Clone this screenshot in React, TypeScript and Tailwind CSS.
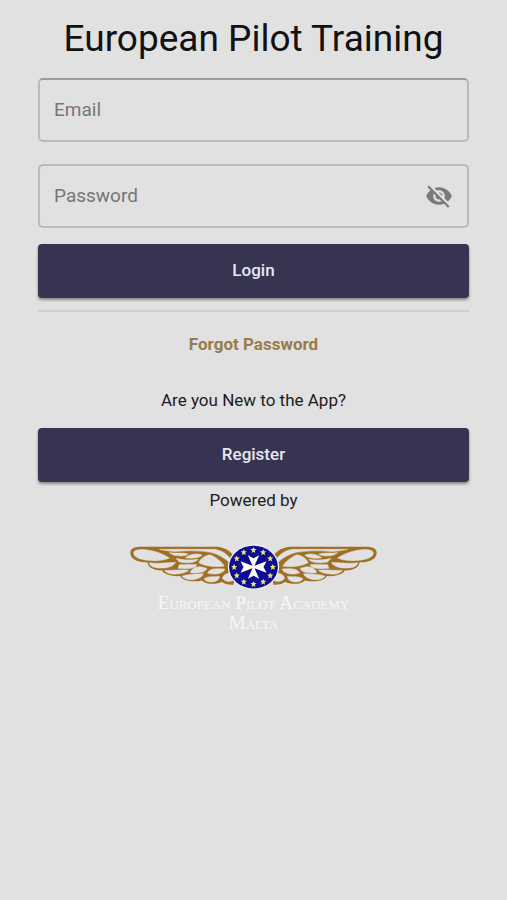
import React, { useState } from 'react';
import { MdVisibility, MdVisibilityOff } from 'react-icons/md';

const STARS = Array.from({ length: 12 }, (_, i) => i * 30);

// Light feather cells cut out of the solid wing shape
const FEATHERS = [
  'M41 51 C41 42 55 40 76 41 C106 44 130 54 148 66 C132 73 108 76 84 73 C58 70 41 63 41 51 Z',
  'M118 40 L284 40 C304 43 318 53 329 66 L329 80 C312 66 294 54 272 49 C236 43 200 44 176 46 C154 47 136 44 118 40 Z',
  'M148 50 C168 53 188 49 204 54 C198 61 174 61 160 57 Z',
  'M196 65 C210 53 232 51 246 57 C238 66 216 69 196 65 Z',
  'M168 67 C186 72 212 74 234 70 C230 80 198 83 178 78 Z',
  'M88 80 C112 84 146 80 166 79 C162 92 140 97 118 96 C100 95 89 90 88 80 Z',
  'M236 80 C242 66 254 59 270 56 C288 64 306 78 312 90 C292 94 258 92 236 80 Z',
  'M178 86 C198 86 220 84 230 86 C228 96 202 101 174 97 Z',
  'M134 103 C158 104 178 100 206 103 C196 112 168 117 150 113 C142 111 136 108 134 103 Z',
  'M214 103 C224 90 240 90 260 97 C258 109 232 114 210 109 Z',
  'M186 120 C202 114 224 114 250 113 C246 126 222 134 204 130 C194 128 188 125 186 120 Z',
  'M262 111 C266 99 284 96 314 99 C312 111 286 119 262 111 Z',
  'M252 128 C262 120 280 122 298 121 C298 134 280 140 266 137 C258 135 253 132 252 128 Z',
  'M308 128 C306 118 318 112 332 110 L338 134 C326 138 314 136 308 128 Z',
];

// Left wing, flipped around the badge for the right one
const Wing: React.FC = () => (
  <g>
    <path
      d="M31 50 C31 38 42 32 62 32 L290 32 C312 34 328 42 340 58 L332 104 L342 136 L340 146 C324 147 312 143 305 137 C290 147 256 145 246 133 C220 139 186 135 180 120 C150 122 130 114 126 103 C100 104 84 94 82 79 C50 79 31 68 31 50 Z"
      fill="#a06f24"
    />
    {FEATHERS.map((d) => (
      <path key={d} d={d} fill="#e1e1e1" stroke="#e1e1e1" strokeWidth="1.5" />
    ))}
  </g>
);

const AcademyLogo: React.FC = () => (
  <svg viewBox="0 0 800 170" className="block w-full" role="img" aria-label="European Pilot Academy wings">
    <Wing />
    <g transform="translate(800 0) scale(-1 1)">
      <Wing />
    </g>
    <ellipse cx="400" cy="93" rx="77" ry="68" fill="#ececf2" />
    <ellipse cx="400" cy="93" rx="73" ry="64" fill="#0b0b96" />
    {STARS.map((angle) => (
      <path
        key={angle}
        transform={`translate(${400 + 58 * Math.sin((angle * Math.PI) / 180)} ${93 - 51 * Math.cos((angle * Math.PI) / 180)})`}
        d="M0 -9 L3 -3 L9 -3 L4 2 L6 9 L0 5 L-6 9 L-4 2 L-9 -3 L-3 -3 Z"
        fill="#ece56a"
      />
    ))}
    <path
      d="M397 89 L383 58 L400 67 L417 58 L403 89 L439 76 L430 93 L439 110 L403 97 L417 128 L400 119 L383 128 L397 97 L361 110 L370 93 L361 76 Z"
      fill="#ffffff"
    />
  </svg>
);

const fieldStyles = 'h-16 w-full rounded-[5px] border-2 border-[#bababa] bg-transparent px-3.5 pb-0.5 text-[19px] text-neutral-800 placeholder:text-[#767676] focus:outline-none';
const buttonStyles = 'h-[54px] w-full rounded bg-[#363450] text-[17px] font-medium text-[#e8e6f4] shadow-[0_2px_3px_rgba(0,0,0,0.4)]';

export default function App() {
  const [showPassword, setShowPassword] = useState<boolean>(false);

  return (
    <main className="flex min-h-screen flex-col items-center bg-[#e1e1e1] px-[38px] pt-4 font-['Roboto',sans-serif] text-[#1c1c1c]">
      <h1 className="text-[37px] leading-[46px] whitespace-nowrap text-[#111111]">European Pilot Training</h1>

      <form className="mt-4 w-full" onSubmit={(e) => e.preventDefault()}>
        <input type="email" aria-label="Email" placeholder="Email" className={`${fieldStyles} border-t-[#9c9c9c]`} />
        <div className="relative mt-[22px]">
          <input
            type={showPassword ? 'text' : 'password'}
            aria-label="Password"
            placeholder="Password"
            className={`${fieldStyles} pr-14`}
          />
          <button
            type="button"
            aria-label={showPassword ? 'Hide password' : 'Show password'}
            onClick={() => setShowPassword(!showPassword)}
            className="absolute inset-y-0 right-4 text-[#7a7a7a]"
          >
            {showPassword ? <MdVisibility className="size-7" /> : <MdVisibilityOff className="size-7" />}
          </button>
        </div>
        <button type="submit" className={`${buttonStyles} mt-4`}>Login</button>
      </form>

      <hr className="mt-3 w-full border-t-2 border-[#d0d0d0]" />

      <a href="#forgot" className="mt-5 text-[17px] leading-6 font-bold text-[#9a7b4c]">Forgot Password</a>

      <p className="mt-8 text-[17px] leading-6">Are you New to the App?</p>
      <button type="button" className={`${buttonStyles} mt-4`}>Register</button>
      <p className="mt-1.5 text-[17px] leading-6">Powered by</p>

      <div className="mt-6 w-[267px]">
        <AcademyLogo />
        <p className="text-center font-['Liberation_Serif',serif] text-[19px] leading-5 text-[#f7f7f7] [font-variant-caps:small-caps]">
          European Pilot Academy
          <br />
          Malta
        </p>
      </div>
    </main>
  );
}
